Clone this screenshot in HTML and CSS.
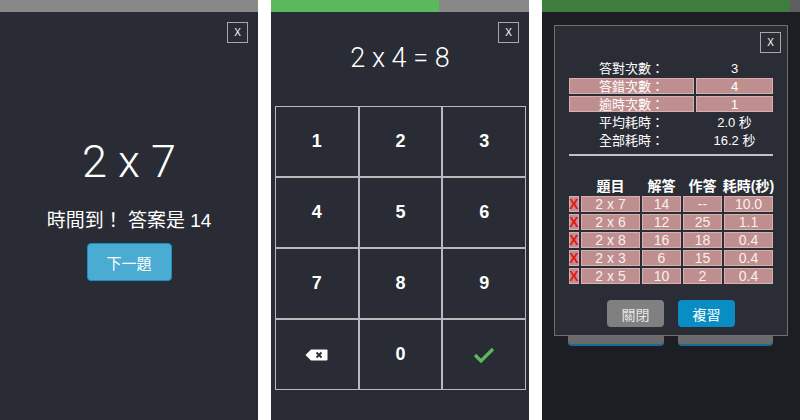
FILE: index.html
```html
<!DOCTYPE html>
<html lang="zh-Hant">
<head>
<meta charset="utf-8">
<title>乘法練習</title>
<link rel="stylesheet" href="styles.css">
</head>
<body>
<div class="screens">
  <section class="phone">
    <div class="bar"><div class="fill" style="width:0%"></div></div>
    <div class="view view-timeout">
      <div class="close-row"><button class="close">X</button></div>
      <div class="question">2 x 7</div>
      <div class="msg">時間到！ 答案是 14</div>
      <button class="next">下一題</button>
    </div>
  </section>

  <section class="phone">
    <div class="bar"><div class="fill" style="width:65%"></div></div>
    <div class="view view-pad">
      <div class="close-row"><button class="close">X</button></div>
      <div class="equation">2 x 4 = 8</div>
      <div class="keypad">
        <button class="key">1</button>
        <button class="key">2</button>
        <button class="key">3</button>
        <button class="key">4</button>
        <button class="key">5</button>
        <button class="key">6</button>
        <button class="key">7</button>
        <button class="key">8</button>
        <button class="key">9</button>
        <button class="key"><svg width="23" height="12" viewBox="0 0 23 12"><path d="M6 0.5H21.5a1 1 0 0 1 1 1V10.5a1 1 0 0 1-1 1H6L0.5 6Z" fill="#fff"/><path d="M11.5 3.5l5 5M16.5 3.5l-5 5" stroke="#292c34" stroke-width="1.8"/></svg></button>
        <button class="key">0</button>
        <button class="key"><svg width="22" height="16" viewBox="0 0 22 16"><path d="M2 8l6 6L20 2" fill="none" stroke="#5cb85c" stroke-width="3.2"/></svg></button>
      </div>
    </div>
  </section>

  <section class="phone phone-dim">
    <div class="bar"><div class="fill" style="width:96%"></div></div>
    <div class="under">
      <div class="under-btn"></div>
      <div class="under-btn"></div>
    </div>
    <div class="modal">
      <div class="close-row modal-close"><button class="close">X</button></div>
      <div class="stats">
        <div class="cell">答對次數：</div><div class="cell">3</div>
        <div class="cell hl">答錯次數：</div><div class="cell hl">4</div>
        <div class="cell hl">逾時次數：</div><div class="cell hl">1</div>
        <div class="cell">平均耗時：</div><div class="cell">2.0 秒</div>
        <div class="cell">全部耗時：</div><div class="cell">16.2 秒</div>
      </div>
      <hr class="rule">
      <div class="results">
        <div class="h"></div><div class="h">題目</div><div class="h">解答</div><div class="h">作答</div><div class="h">耗時(秒)</div>
        <div class="c mark">X</div><div class="c">2 x 7</div><div class="c">14</div><div class="c">--</div><div class="c">10.0</div>
        <div class="c mark">X</div><div class="c">2 x 6</div><div class="c">12</div><div class="c">25</div><div class="c">1.1</div>
        <div class="c mark">X</div><div class="c">2 x 8</div><div class="c">16</div><div class="c">18</div><div class="c">0.4</div>
        <div class="c mark">X</div><div class="c">2 x 3</div><div class="c">6</div><div class="c">15</div><div class="c">0.4</div>
        <div class="c mark">X</div><div class="c">2 x 5</div><div class="c">10</div><div class="c">2</div><div class="c">0.4</div>
      </div>
      <div class="actions">
        <button class="btn btn-close">關閉</button>
        <button class="btn btn-review">複習</button>
      </div>
    </div>
  </section>
</div>
</body>
</html>
```

FILE: styles.css
```css
* { box-sizing: border-box; }
html, body { margin: 0; padding: 0; background: #fff; }
body {
  font-family: "Liberation Sans", "Noto Sans CJK TC", sans-serif;
  color: #fff;
}
button { font-family: inherit; color: inherit; cursor: pointer; }

.screens {
  display: flex;
  gap: 13px;
  width: 800px;
  height: 420px;
}
.phone {
  position: relative;
  flex: 0 0 258px;
  height: 420px;
  background: #292c34;
  overflow: hidden;
}
.phone:last-child { flex: 1 1 auto; }

.bar {
  height: 12px;
  background: #888888;
}
.fill {
  height: 100%;
  background: #5cb85c;
}

.view {
  display: flex;
  flex-direction: column;
  align-items: center;
}
.close-row {
  align-self: stretch;
  display: flex;
  justify-content: flex-end;
  padding: 10px 10px 0 0;
}
.close {
  width: 21px;
  height: 21px;
  padding: 0;
  border: 1px solid #a8a8a8;
  background: transparent;
  font-size: 10px;
  line-height: 19px;
  text-align: center;
}

/* screen 1 */
.question {
  margin-top: 96px;
  font-family: Roboto, "Liberation Sans", sans-serif;
  font-weight: 300;
  font-size: 45px;
  line-height: 46px;
}
.msg {
  margin-top: 27px;
  font-family: "Liberation Sans", "Noto Sans CJK TC", sans-serif;
  font-size: 19px;
  line-height: 18px;
}
.next {
  margin-top: 13px;
  width: 85px;
  height: 38px;
  border: 1px solid #1a8fbf;
  border-radius: 4px;
  background: #4aabd3;
  font-family: "Noto Sans CJK TC", sans-serif;
  font-size: 15px;
}

/* screen 2 */
.equation {
  margin-top: 2px;
  font-family: Roboto, "Liberation Sans", sans-serif;
  font-weight: 300;
  font-size: 27px;
  line-height: 26px;
}
.keypad {
  margin-top: 35px;
  align-self: stretch;
  margin-left: 4px;
  margin-right: 3px;
  display: grid;
  grid-template-columns: repeat(3, 1fr);
  grid-auto-rows: 71px;
}
.key {
  display: flex;
  align-items: center;
  justify-content: center;
  border: 1px solid #b9b9b9;
  background: transparent;
  font-family: "Liberation Sans", sans-serif;
  font-weight: bold;
  font-size: 18px;
  padding: 0;
}

/* screen 3 (dimmed with modal) */
.phone-dim { background: #1c1e24; }
.phone-dim .bar { background: #5f5f5f; }
.phone-dim .fill { background: #3f7d3f; }
.under {
  display: flex;
  gap: 14px;
  margin: 298px 0 0 26px;
}
.under-btn {
  width: 96px;
  height: 36px;
  border-radius: 4px;
  background: #6a6a6a;
  border-bottom: 2px solid #156f92;
}
.under-btn + .under-btn { width: 95px; }

.modal {
  position: absolute;
  top: 25px;
  left: 12px;
  width: 234px;
  padding: 6px 14px 8px;
  background: #2a2d35;
  border: 1px solid #6f6f6f;
}
.modal-close {
  padding: 0;
  margin-right: -8px;
}
.stats {
  margin-top: 7px;
  display: grid;
  grid-template-columns: 125px 77px;
  grid-auto-rows: 16px;
  gap: 2px;
}
.cell, .c, .h {
  display: flex;
  align-items: center;
  justify-content: center;
  font-size: 13px;
  line-height: 1;
  white-space: nowrap;
}
.hl, .c {
  background: #bf8f8f;
  border: 1px solid #d7b0b0;
}
.rule {
  margin: 6px 0 0;
  height: 2px;
  border: 0;
  background: #c2c2c2;
}
.results {
  margin-top: 22px;
  display: grid;
  grid-template-columns: 10px 59px 39px 39px 49px;
  grid-auto-rows: 16px;
  gap: 2px;
}
.h { font-weight: bold; font-size: 14px; }
.c { font-size: 14px; color: #fbeeee; }
.c.mark {
  color: #e8141c;
  font-weight: bold;
  font-size: 14px;
}
.actions {
  margin-top: 16px;
  display: flex;
  justify-content: center;
  gap: 14px;
}
.btn {
  width: 57px;
  height: 27px;
  border: 0;
  border-radius: 4px;
  font-family: "Noto Sans CJK TC", sans-serif;
  font-size: 14px;
  padding: 0;
}
.btn-close { background: #808080; color: #e6e6e6; }
.btn-review { background: #0a8dc2; }
```
